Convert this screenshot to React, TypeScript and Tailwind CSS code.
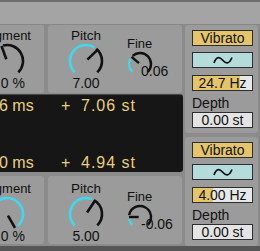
import React from "react";

const CYAN = "#3fd9ee";

function pt(cx: number, cy: number, r: number, a: number) {
  const t = (a * Math.PI) / 180;
  return [cx + r * Math.sin(t), cy - r * Math.cos(t)];
}

function arc(cx: number, cy: number, r: number, a1: number, a2: number) {
  const [x1, y1] = pt(cx, cy, r, a1);
  const [x2, y2] = pt(cx, cy, r, a2);
  const large = a2 - a1 > 180 ? 1 : 0;
  return `M${x1} ${y1} A${r} ${r} 0 ${large} 1 ${x2} ${y2}`;
}

interface KnobProps {
  w: number;
  h: number;
  r: number;
  sw: number;
  on: [number, number];
  off?: [number, number];
  needle: number;
}

function Knob({ w, h, r, sw, on, off, needle }: KnobProps) {
  const cx = w / 2;
  const cy = h / 2;
  const [nx, ny] = pt(cx, cy, r, needle);
  const [sx, sy] = pt(cx, cy, r * 0.12, needle);
  return (
    <svg width={w} height={h} className="shrink-0">
      <path d={arc(cx, cy, r, on[0], on[1])} stroke={CYAN} strokeWidth={sw} fill="none" />
      {off && <path d={arc(cx, cy, r, off[0], off[1])} stroke="#111" strokeWidth={sw} fill="none" />}
      <line x1={sx} y1={sy} x2={nx} y2={ny} stroke="#111" strokeWidth={sw} />
    </svg>
  );
}

function Sine() {
  return (
    <svg width="20" height="10" viewBox="0 0 20 10">
      <path d="M1 8 C3 2 6 1 9.5 5 S16 9.5 19 2.5" stroke="#111" strokeWidth="1.7" fill="none" />
    </svg>
  );
}

function VibratoPanel({ hz, low, h }: { hz: string; low?: boolean; h: string }) {
  return (
    <div className={`${h} rounded-[3px] bg-[#9b9b9b] pl-[7px] pt-[5px] flex flex-col text-[14px] text-[#111]`}>
      <div className="w-[61px] h-[16px] border border-[#2e2e2e] bg-[#e4c56a] leading-[14px] text-center">
        Vibrato
      </div>
      <div className="mt-[6px] w-[61px] h-[16px] border border-[#2e2e2e] bg-[#b3dcda] flex items-center justify-center">
        <Sine />
      </div>
      <div
        className={`mt-[7px] w-[61px] h-[16px] border border-[#2e2e2e] leading-[14px] text-center ${
          low
            ? "bg-[linear-gradient(to_right,#e4c56a_20px,#e8e8e8_20px)]"
            : "bg-[linear-gradient(to_right,#e4c56a_47px,#e8e8e8_47px)]"
        }`}
      >
        {hz}
      </div>
      <div className="mt-[5px] leading-[15px]">Depth</div>
      <div className="mt-[1px] w-[61px] h-[16px] border border-[#2e2e2e] bg-[#e4e4e4] leading-[14px] text-center">
        0.00 st
      </div>
    </div>
  );
}

interface RowProps {
  seg: { on: [number, number]; off?: [number, number]; needle: number };
  pitch: { on: [number, number]; off: [number, number]; needle: number; value: string };
  fine: { on: [number, number]; off: [number, number]; needle: number; value: string };
  top: string;
}

function KnobRow({ seg, pitch, fine, top }: RowProps) {
  return (
    <div className="h-[68px] flex gap-[4px] text-[#111] text-[13px]">
      <div className={`-ml-[30px] w-[74px] rounded-[3px] bg-[#9b9b9b] flex flex-col items-center ${top}`}>
        <div className="self-end mr-[13px] leading-[15px] whitespace-nowrap">Segment</div>
        <Knob w={38} h={36} r={16} sw={2.6} on={seg.on} off={seg.off} needle={seg.needle} />
        <div className="self-end mr-[19px] -mt-[3px] text-[14px] leading-[14px] whitespace-nowrap">50.0 %</div>
      </div>
      <div className={`w-[134px] rounded-[3px] bg-[#9b9b9b] flex ${top}`}>
        <div className="ml-[19px] w-[38px] flex flex-col items-center">
          <div className="leading-[15px] text-[13.5px]">Pitch</div>
          <Knob w={38} h={36} r={16} sw={2.6} on={pitch.on} off={pitch.off} needle={pitch.needle} />
          <div className="-mt-[3px] text-[14px] leading-[14px]">{pitch.value}</div>
        </div>
        <div className="ml-[22px] flex flex-col pt-[8px]">
          <div className="leading-[15px]">Fine</div>
          <div className="flex">
            <Knob w={26} h={26} r={11} sw={2.4} on={fine.on} off={fine.off} needle={fine.needle} />
            <div className="-ml-[12px] mt-[13px] text-[14px] leading-[14px]">{fine.value}</div>
          </div>
        </div>
      </div>
    </div>
  );
}

function Display() {
  const line = (a: string, b: string) => (
    <div className="flex items-center text-[16px] leading-[17px] text-[#ead07e] whitespace-nowrap">
      <span className="w-[62px] -ml-[1px]">{a}</span>
      <span className="w-[20px]">+</span>
      <span className="tracking-[1px]">{b}</span>
    </div>
  );
  return (
    <div className="mt-[1px] h-[78px] rounded-r-[3px] bg-[#161616] border-t border-[#4a4a4a] pt-[2px] pb-[1px] flex flex-col justify-between">
      {line("6 ms", "7.06 st")}
      {line("0 ms", "4.94 st")}
    </div>
  );
}

export default function App() {
  return (
    <div className="w-[260px] h-[251px] overflow-hidden bg-[#8b8b8b] flex flex-col font-['Liberation_Sans',Arial,sans-serif]">
      <div className="h-[25px] shrink-0 border-t-2 border-b border-t-[#6e6e6e] border-b-[#878787] bg-[#a4a4a4]" />
      <div className="h-[221px] shrink-0 flex">
        <div className="w-[183px] flex flex-col">
          <KnobRow
            top="pt-[3px]"
            seg={{ on: [-135, -30], off: [-14, 135], needle: -20 }}
            pitch={{ on: [-135, 32], off: [40, 135], needle: 46, value: "7.00" }}
            fine={{ on: [-135, -62], off: [-42, 135], needle: -50, value: "0.06" }}
          />
          <Display />
          <div className="mt-[4px]">
            <KnobRow
              top="pt-[5px]"
              seg={{ on: [-135, 138], needle: 150 }}
              pitch={{ on: [-135, 22], off: [30, 135], needle: 34, value: "5.00" }}
              fine={{ on: [-135, -100], off: [-80, 135], needle: -90, value: "-0.06" }}
            />
          </div>
        </div>
        <div className="ml-[2px] w-[73px] flex flex-col gap-[4px]">
          <VibratoPanel h="h-[108px]" hz="24.7 Hz" />
          <VibratoPanel h="h-[109px]" hz="4.00 Hz" low />
        </div>
      </div>
      <div className="flex-1 bg-[#565656]" />
    </div>
  );
}
